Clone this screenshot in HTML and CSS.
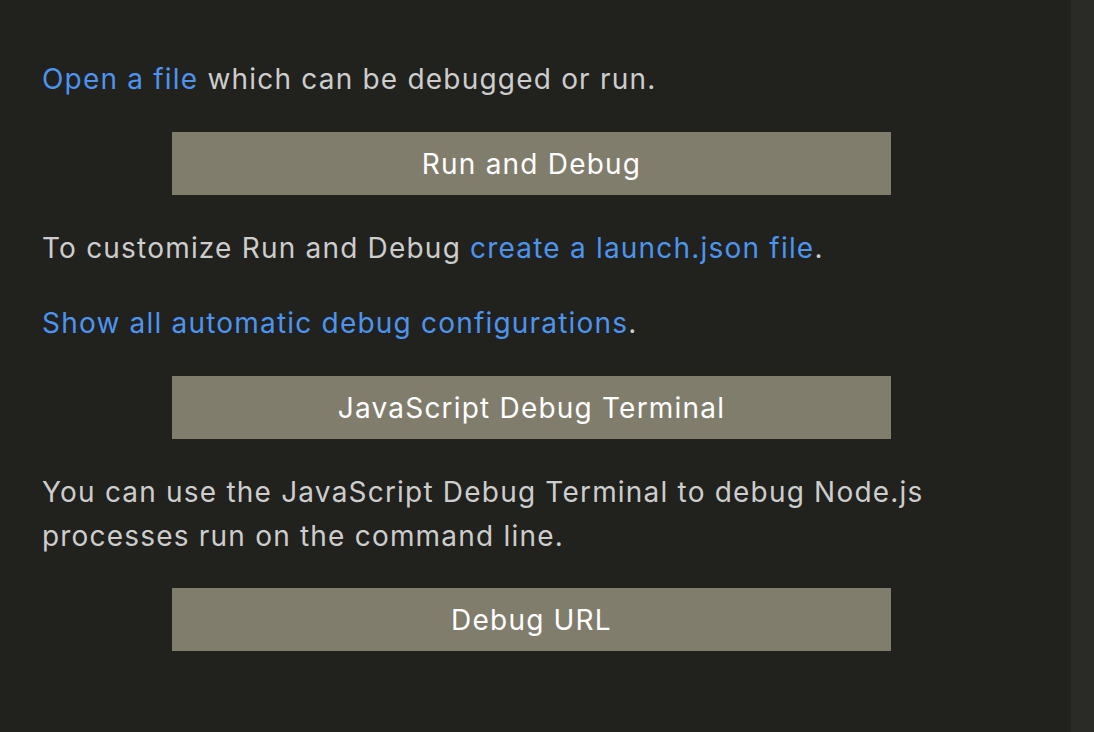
FILE: index.html
```html
<!DOCTYPE html>
<html>
<head>
<meta charset="utf-8">
<link rel="stylesheet" href="styles.css">
</head>
<body>
<div class="frame">
  <div class="view">
    <p class="line"><a class="link">Open a file</a> which can be debugged or run.</p>
    <div class="btn">Run and Debug</div>
    <p class="line">To customize Run and Debug <a class="link">create a launch.json file</a>.</p>
    <p class="line"><a class="link">Show all automatic debug configurations</a>.</p>
    <div class="btn">JavaScript Debug Terminal</div>
    <p class="line">You can use the JavaScript Debug Terminal to debug Node.js processes run on the command line.</p>
    <div class="btn btn-last">Debug URL</div>
  </div>
  <div class="scroll"></div>
</div>
</body>
</html>
```
FILE: styles.css
```css
html, body {
  margin: 0;
  padding: 0;
  background: #21211e;
}
.frame {
  display: flex;
  width: 1094px;
  height: 732px;
  overflow: hidden;
}
.view {
  flex: 1;
  display: flex;
  flex-direction: column;
  gap: 31px;
  padding: 57px 50px 0 42px;
  font-family: Inter, "Noto Sans", sans-serif;
  font-size: 28px;
  letter-spacing: 1.2px;
  color: #cdcdcd;
}
.line {
  margin: 0;
  line-height: 44px;
}
.link {
  color: #4d94ef;
}
.btn {
  align-self: center;
  width: 719px;
  height: 63px;
  background: #817d6d;
  color: #ffffff;
  display: flex;
  align-items: center;
  justify-content: center;
  line-height: 1;
}
.btn-last {
  margin-top: -1px;
}
.scroll {
  width: 23px;
  background: #2a2a26;
}
```
